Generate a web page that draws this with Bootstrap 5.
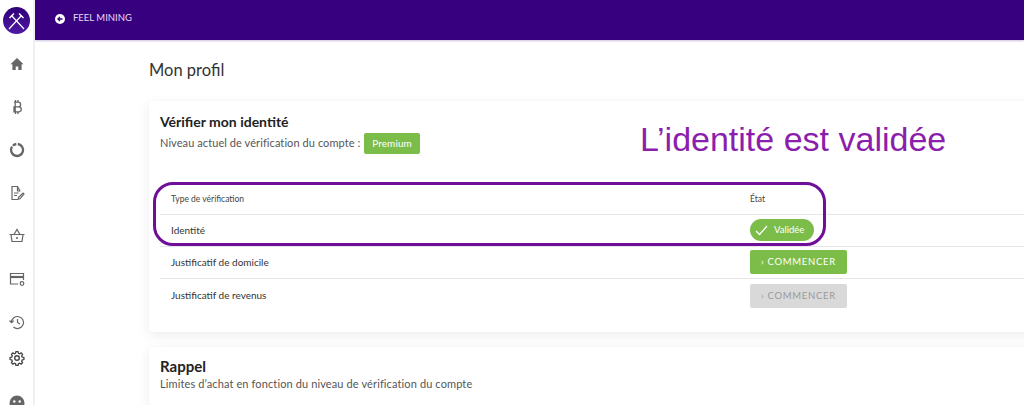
<!DOCTYPE html>
<html lang="fr">
<head>
    <meta charset="UTF-8">
    <meta name="viewport" content="width=device-width, initial-scale=1.0">
    <title>Mon profil</title>
    <link href="https://cdn.jsdelivr.net/npm/bootstrap@5.3.0/dist/css/bootstrap.min.css" rel="stylesheet">
    <style>
        html, body { height: 405px; overflow: hidden; }
        body { font-family: "Lato", "Noto Sans", sans-serif; background: #fff; color: #333; position: relative; }
        .side-rail { width: 35px; flex: none; border-right: 2px solid #f0f0f2; height: 405px; overflow: hidden; padding-top: 7px; }
        .rail-logo { width: 27px; height: 27px; margin-left: 3px; margin-bottom: 22px; display: block; }
        .rail-icon { width: 16px; height: 16px; display: block; margin: 0 0 27px 8.500px; color: #666; }
        .rail-icon.icon-history { margin-bottom: 20px; }
        .rail-icon.icon-gear { margin-bottom: 29px; }
        .top-strip { height: 40px; background: #36007f; color: #e6dcf3; font-size: 9.500px; padding-left: 20px; padding-bottom: 3px; box-shadow: 0 1px 2px rgba(60,0,130,.25); }
        .page-area { flex: 1; min-width: 0; height: 405px; overflow: hidden; }
        .page-inner { padding: 20px 0 0 114px; }
        .page-heading { font-size: 16.500px; font-weight: 400; line-height: 20px; margin: 0 0 21px; color: #333; }
        .info-card { margin-right: -12px; background: #fff; border: 0; border-radius: 4px; box-shadow: 0 3px 12px rgba(40,40,80,.09); padding: 13px 11px 0; }
        .card-one { height: 231px; }
        .card-two { margin-top: 15px; height: 58px; }
        .card-title-txt { font-size: 14px; font-weight: 700; line-height: 16px; margin: 0 0 3px; color: #222; }
        .card-two .card-title-txt { font-size: 15px; line-height: 16px; margin-bottom: 3px; margin-top: -2px; }
        .card-sub { font-size: 11px; color: #555; line-height: 20px; letter-spacing: .08px; }
        .card-two .card-sub { line-height: 14px; letter-spacing: .12px; }
        .level-tag { background: #7cbd4a; color: #fff; font-size: 10px; line-height: 21px; padding: 0 8px; border-radius: 2px; margin-left: 1px; display: inline-block; }
        .verif-table { margin: 28px 0 0; width: 100%; font-size: 10px; color: #333; --bs-table-border-color: #e6e6e8; }
        .verif-table td, .verif-table th { height: 32px; padding: 0 0 0 11px; vertical-align: middle; font-weight: 400; }
        .verif-table th { font-size: 8.500px; color: #444; padding-top: 3px; }
        .verif-table tr:last-child td { border-bottom: 0; height: 35px; }
        .col-state { width: 275px; }
        .verif-table td.col-state, .verif-table th.col-state { padding-left: 0; }
        .pill-ok { display: inline-flex; align-items: center; gap: 6px; width: 64px; height: 22px; border-radius: 11px; background: #7cbd4a; color: #fff; font-size: 9.500px; padding-left: 5px; vertical-align: middle; }
        .start-btn { --bs-btn-padding-x: 0; --bs-btn-padding-y: 0; --bs-btn-font-size: 9.500px; --bs-btn-border-radius: 2px; width: 97px; height: 24px; line-height: 24px; letter-spacing: .7px; border: 0; background: #7cbd4a; color: #fff; display: block; }
        .start-btn.btn-off, .start-btn:disabled { background: #d9d9d9; color: #999; opacity: 1; }
        .note-frame { position: absolute; left: 153px; top: 182px; width: 673px; height: 64px; border: 3px solid #6f0e96; border-radius: 20px; pointer-events: none; }
        .note-text { position: absolute; left: 640px; top: 118px; font-family: "Liberation Sans", Arial, sans-serif; font-size: 34px; line-height: 42px; color: #8b1eac; white-space: nowrap; }
    </style>
</head>
<body>
    <div class="d-flex">
        <nav class="side-rail">
            <svg class="rail-logo" viewBox="0 0 27 27">
                <defs><linearGradient id="logoFill" x1="0" y1="0" x2="0" y2="1"><stop offset="0" stop-color="#2f0076"/><stop offset="1" stop-color="#4f1aa6"/></linearGradient></defs>
                <circle cx="13.500" cy="13.500" r="13.500" fill="url(#logoFill)"/>
                <path d="M8.500 8.500 21 22M18.500 8.500 6 22" stroke="#fff" stroke-width="1.200" fill="none"/>
                <path d="M6.500 11 11 6.500M20.500 11 16 6.500" stroke="#fff" stroke-width="1.500" fill="none"/>
            </svg>
            <svg class="rail-icon" viewBox="0 0 16 16" fill="currentColor"><path d="M8 2 1.500 8.300h1.900V14h3.300v-3.600h2.600V14h3.300V8.300h1.900z"/></svg>
            <svg class="rail-icon" viewBox="0 0 16 16" fill="none" stroke="currentColor" stroke-width="1.300"><path d="M5 3.200h4.300a2.300 2.300 0 0 1 0 4.600H5m0 0h4.800a2.500 2.500 0 0 1 0 5H5zM6.200 3.200v9.600M6.500 1v2.200M9 1v2.200M6.500 12.800V15M9 12.800V15"/></svg>
            <svg class="rail-icon" viewBox="0 0 16 16" fill="none" stroke="currentColor" stroke-width="2.300"><path d="M8.800 2A6 6 0 1 1 3 4.700M3.900 3.800A6 6 0 0 1 7.300 2"/></svg>
            <svg class="rail-icon" viewBox="0 0 16 16" fill="none" stroke="currentColor" stroke-width="1.200"><path d="M11 6 8.500 1.500H3v13h6.500M8.500 1.500V6H11.500M5 8h4.500M5 10.500h3M9.500 12.500l4.500-4.500 1 1-4 4.800-1.800.400z"/></svg>
            <svg class="rail-icon" viewBox="0 0 16 16" fill="none" stroke="currentColor" stroke-width="1.200"><path d="M.5 6.500h15M2 6.500l1 7h10l1-7M5 6.500 8 1.500l3 5"/><circle cx="8" cy="10" r="1" fill="currentColor" stroke="none"/></svg>
            <svg class="rail-icon" viewBox="0 0 16 16" fill="none" stroke="currentColor" stroke-width="1.200"><path d="M9 13H1.500V2.500h13V9"/><path d="M1.500 6h13" stroke-width="2.200"/><circle cx="13" cy="12.500" r="1.800"/></svg>
            <svg class="rail-icon icon-history" viewBox="0 0 16 16" fill="none" stroke="currentColor" stroke-width="1.200"><path d="M2.500 8.500A6 6 0 1 1 4.500 13M.5 6.500l2 2.200 2.200-2M8.500 5v3.500l2.500 1.500"/></svg>
            <svg class="rail-icon icon-gear" style="color:#444" viewBox="0 0 16 16" fill="none" stroke="currentColor" stroke-width="1.400"><circle cx="8" cy="8" r="2.300"/><path d="M6.800 1.200h2.400l.4 1.900 1.300.6 1.700-1 1.600 1.700-1 1.600.6 1.400 1.900.4v2.300l-1.900.4-.6 1.400 1 1.600-1.600 1.700-1.700-1-1.300.6-.4 1.900H6.800l-.4-1.900-1.300-.6-1.700 1-1.600-1.700 1-1.600-.6-1.400-1.900-.4V7.800l1.900-.4.600-1.400-1-1.600 1.600-1.700 1.700 1 1.300-.6z" transform="translate(8 8) scale(.9) translate(-8 -8.400)"/></svg>
            <svg class="rail-icon" viewBox="0 0 16 16" fill="currentColor"><circle cx="8" cy="8" r="7.500"/><circle cx="5.300" cy="6.500" r="1.200" fill="#fff"/><circle cx="10.700" cy="6.500" r="1.200" fill="#fff"/></svg>
        </nav>
        <div class="page-area">
            <header class="top-strip d-flex align-items-center gap-2">
                <svg width="10" height="10" viewBox="0 0 10 10"><circle cx="5" cy="5" r="5" fill="#fff"/><path d="M7.500 5H3M5 2.900 2.900 5 5 7.100" stroke="#36007f" stroke-width="1.300" fill="none"/></svg>
                <span>FEEL MINING</span>
            </header>
            <main class="page-inner">
                <h1 class="page-heading">Mon profil</h1>
                <section class="card info-card card-one">
                    <h2 class="card-title-txt">Vérifier mon identité</h2>
                    <div class="card-sub">Niveau actuel de vérification du compte : <span class="level-tag">Premium</span></div>
                    <table class="table verif-table">
                        <thead>
                            <tr><th>Type de vérification</th><th class="col-state">État</th></tr>
                        </thead>
                        <tbody>
                            <tr>
                                <td>Identité</td>
                                <td class="col-state">
                                    <span class="pill-ok">
                                        <svg width="13" height="11" viewBox="0 0 13 11"><path d="M1 6l3.500 3.500L12 1" stroke="#fff" stroke-width="1.300" fill="none"/></svg>
                                        Validée
                                    </span>
                                </td>
                            </tr>
                            <tr>
                                <td>Justificatif de domicile</td>
                                <td class="col-state"><button type="button" class="btn start-btn">› COMMENCER</button></td>
                            </tr>
                            <tr>
                                <td>Justificatif de revenus</td>
                                <td class="col-state"><button type="button" class="btn start-btn btn-off" disabled>› COMMENCER</button></td>
                            </tr>
                        </tbody>
                    </table>
                </section>
                <section class="card info-card card-two">
                    <h2 class="card-title-txt">Rappel</h2>
                    <div class="card-sub">Limites d’achat en fonction du niveau de vérification du compte</div>
                </section>
            </main>
        </div>
    </div>
    <div class="note-frame"></div>
    <div class="note-text">L’identité est validée</div>
    <script src="https://cdn.jsdelivr.net/npm/bootstrap@5.3.0/dist/js/bootstrap.bundle.min.js"></script>
</body>
</html>
